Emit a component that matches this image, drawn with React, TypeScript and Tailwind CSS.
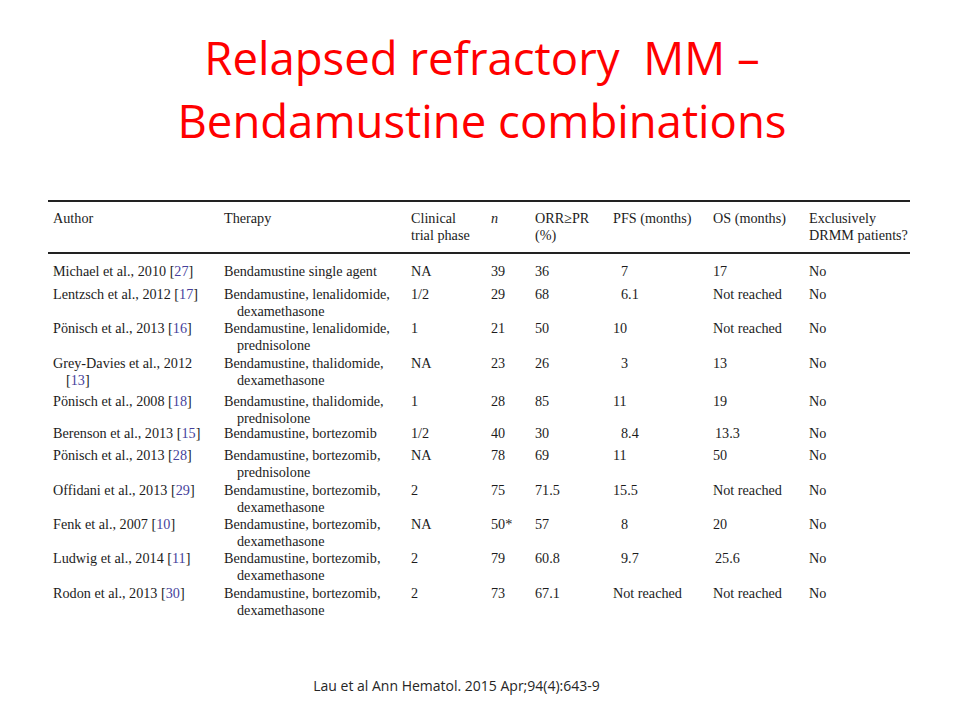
import React from 'react';

type Row = {
  author: string[];
  refNum: string;
  therapy: string[];
  phase: string;
  n: string;
  orr: string;
  pfs: string;
  pfsShift?: boolean;
  os: string;
  osShift?: boolean;
  drmm: string;
  height: string;
};

const rows: Row[] = [
  { author: ['Michael et al., 2010'], refNum: '27', therapy: ['Bendamustine single agent'], phase: 'NA', n: '39', orr: '36', pfs: '7', pfsShift: true, os: '17', drmm: 'No', height: 'h-[23px]' },
  { author: ['Lentzsch et al., 2012'], refNum: '17', therapy: ['Bendamustine, lenalidomide,', 'dexamethasone'], phase: '1/2', n: '29', orr: '68', pfs: '6.1', pfsShift: true, os: 'Not reached', drmm: 'No', height: 'h-[34px]' },
  { author: ['Pönisch et al., 2013'], refNum: '16', therapy: ['Bendamustine, lenalidomide,', 'prednisolone'], phase: '1', n: '21', orr: '50', pfs: '10', os: 'Not reached', drmm: 'No', height: 'h-[35px]' },
  { author: ['Grey-Davies et al., 2012', ''], refNum: '13', therapy: ['Bendamustine, thalidomide,', 'dexamethasone'], phase: 'NA', n: '23', orr: '26', pfs: '3', pfsShift: true, os: '13', drmm: 'No', height: 'h-[38px]' },
  { author: ['Pönisch et al., 2008'], refNum: '18', therapy: ['Bendamustine, thalidomide,', 'prednisolone'], phase: '1', n: '28', orr: '85', pfs: '11', os: '19', drmm: 'No', height: 'h-[32px]' },
  { author: ['Berenson et al., 2013'], refNum: '15', therapy: ['Bendamustine, bortezomib'], phase: '1/2', n: '40', orr: '30', pfs: '8.4', pfsShift: true, os: '13.3', osShift: true, drmm: 'No', height: 'h-[22px]' },
  { author: ['Pönisch et al., 2013'], refNum: '28', therapy: ['Bendamustine, bortezomib,', 'prednisolone'], phase: 'NA', n: '78', orr: '69', pfs: '11', os: '50', drmm: 'No', height: 'h-[35px]' },
  { author: ['Offidani et al., 2013'], refNum: '29', therapy: ['Bendamustine, bortezomib,', 'dexamethasone'], phase: '2', n: '75', orr: '71.5', pfs: '15.5', os: 'Not reached', drmm: 'No', height: 'h-[34px]' },
  { author: ['Fenk et al., 2007'], refNum: '10', therapy: ['Bendamustine, bortezomib,', 'dexamethasone'], phase: 'NA', n: '50*', orr: '57', pfs: '8', pfsShift: true, os: '20', drmm: 'No', height: 'h-[34px]' },
  { author: ['Ludwig et al., 2014'], refNum: '11', therapy: ['Bendamustine, bortezomib,', 'dexamethasone'], phase: '2', n: '79', orr: '60.8', pfs: '9.7', pfsShift: true, os: '25.6', osShift: true, drmm: 'No', height: 'h-[35px]' },
  { author: ['Rodon et al., 2013'], refNum: '30', therapy: ['Bendamustine, bortezomib,', 'dexamethasone'], phase: '2', n: '73', orr: '67.1', pfs: 'Not reached', os: 'Not reached', drmm: 'No', height: 'h-[34px]' },
];

const gridCols = 'grid grid-cols-[171px_187px_80px_44px_78px_100px_96px_1fr]';

function Ref({ num }: { num: string }) {
  return (
    <span>
      [<span className="text-[#463f9c]">{num}</span>]
    </span>
  );
}

function AuthorCell({ row }: { row: Row }) {
  // Grey-Davies wraps its reference onto a second, indented line
  if (row.author.length > 1) {
    return (
      <div>
        <div className="whitespace-nowrap">{row.author[0]}</div>
        <div className="pl-[13px]">
          <Ref num={row.refNum} />
        </div>
      </div>
    );
  }
  return (
    <div className="whitespace-nowrap">
      {row.author[0]} <Ref num={row.refNum} />
    </div>
  );
}

export default function App() {
  return (
    <div className="w-[960px] h-[720px] bg-white flex flex-col overflow-hidden">
      {/* Slide title */}
      <h1 className="pt-[26px] pl-[4px] text-center text-[45.5px] leading-[63px] text-[#ff0000] font-['Open_Sans',sans-serif]">
        Relapsed refractory&nbsp; MM –<br />
        Bendamustine combinations
      </h1>

      {/* Table */}
      <div className="mt-[48px] ml-[48px] w-[862px] text-[14.2px] leading-[17px] text-[#1c1c1c] font-['Liberation_Serif',serif]">
        <div className={`${gridCols} border-t-2 border-b-2 border-[#222] pt-[8px] pb-[8px] pl-[5px]`}>
          <div>Author</div>
          <div>Therapy</div>
          <div>
            Clinical
            <br />
            trial phase
          </div>
          <div className="italic">n</div>
          <div>
            ORR≥PR
            <br />
            (%)
          </div>
          <div>PFS (months)</div>
          <div>OS (months)</div>
          <div className="whitespace-nowrap">
            Exclusively
            <br />
            DRMM patients?
          </div>
        </div>

        <div className="pt-[9px] pl-[5px]">
          {rows.map((row, i) => (
            <div key={i} className={`${gridCols} ${row.height}`}>
              <AuthorCell row={row} />
              <div>
                <div className="whitespace-nowrap">{row.therapy[0]}</div>
                {row.therapy[1] && <div className="pl-[13px]">{row.therapy[1]}</div>}
              </div>
              <div>{row.phase}</div>
              <div>{row.n}</div>
              <div>{row.orr}</div>
              <div className={row.pfsShift ? 'pl-[8px]' : ''}>{row.pfs}</div>
              <div className={row.osShift ? 'pl-[2px] whitespace-nowrap' : 'whitespace-nowrap'}>{row.os}</div>
              <div>{row.drmm}</div>
            </div>
          ))}
        </div>
      </div>

      {/* Citation */}
      <div className="mt-[58px] pr-[47px] text-center text-[14px] leading-[18px] text-[#262626] font-['Open_Sans',sans-serif]">
        Lau et al Ann Hematol. 2015 Apr;94(4):643-9
      </div>
    </div>
  );
}
